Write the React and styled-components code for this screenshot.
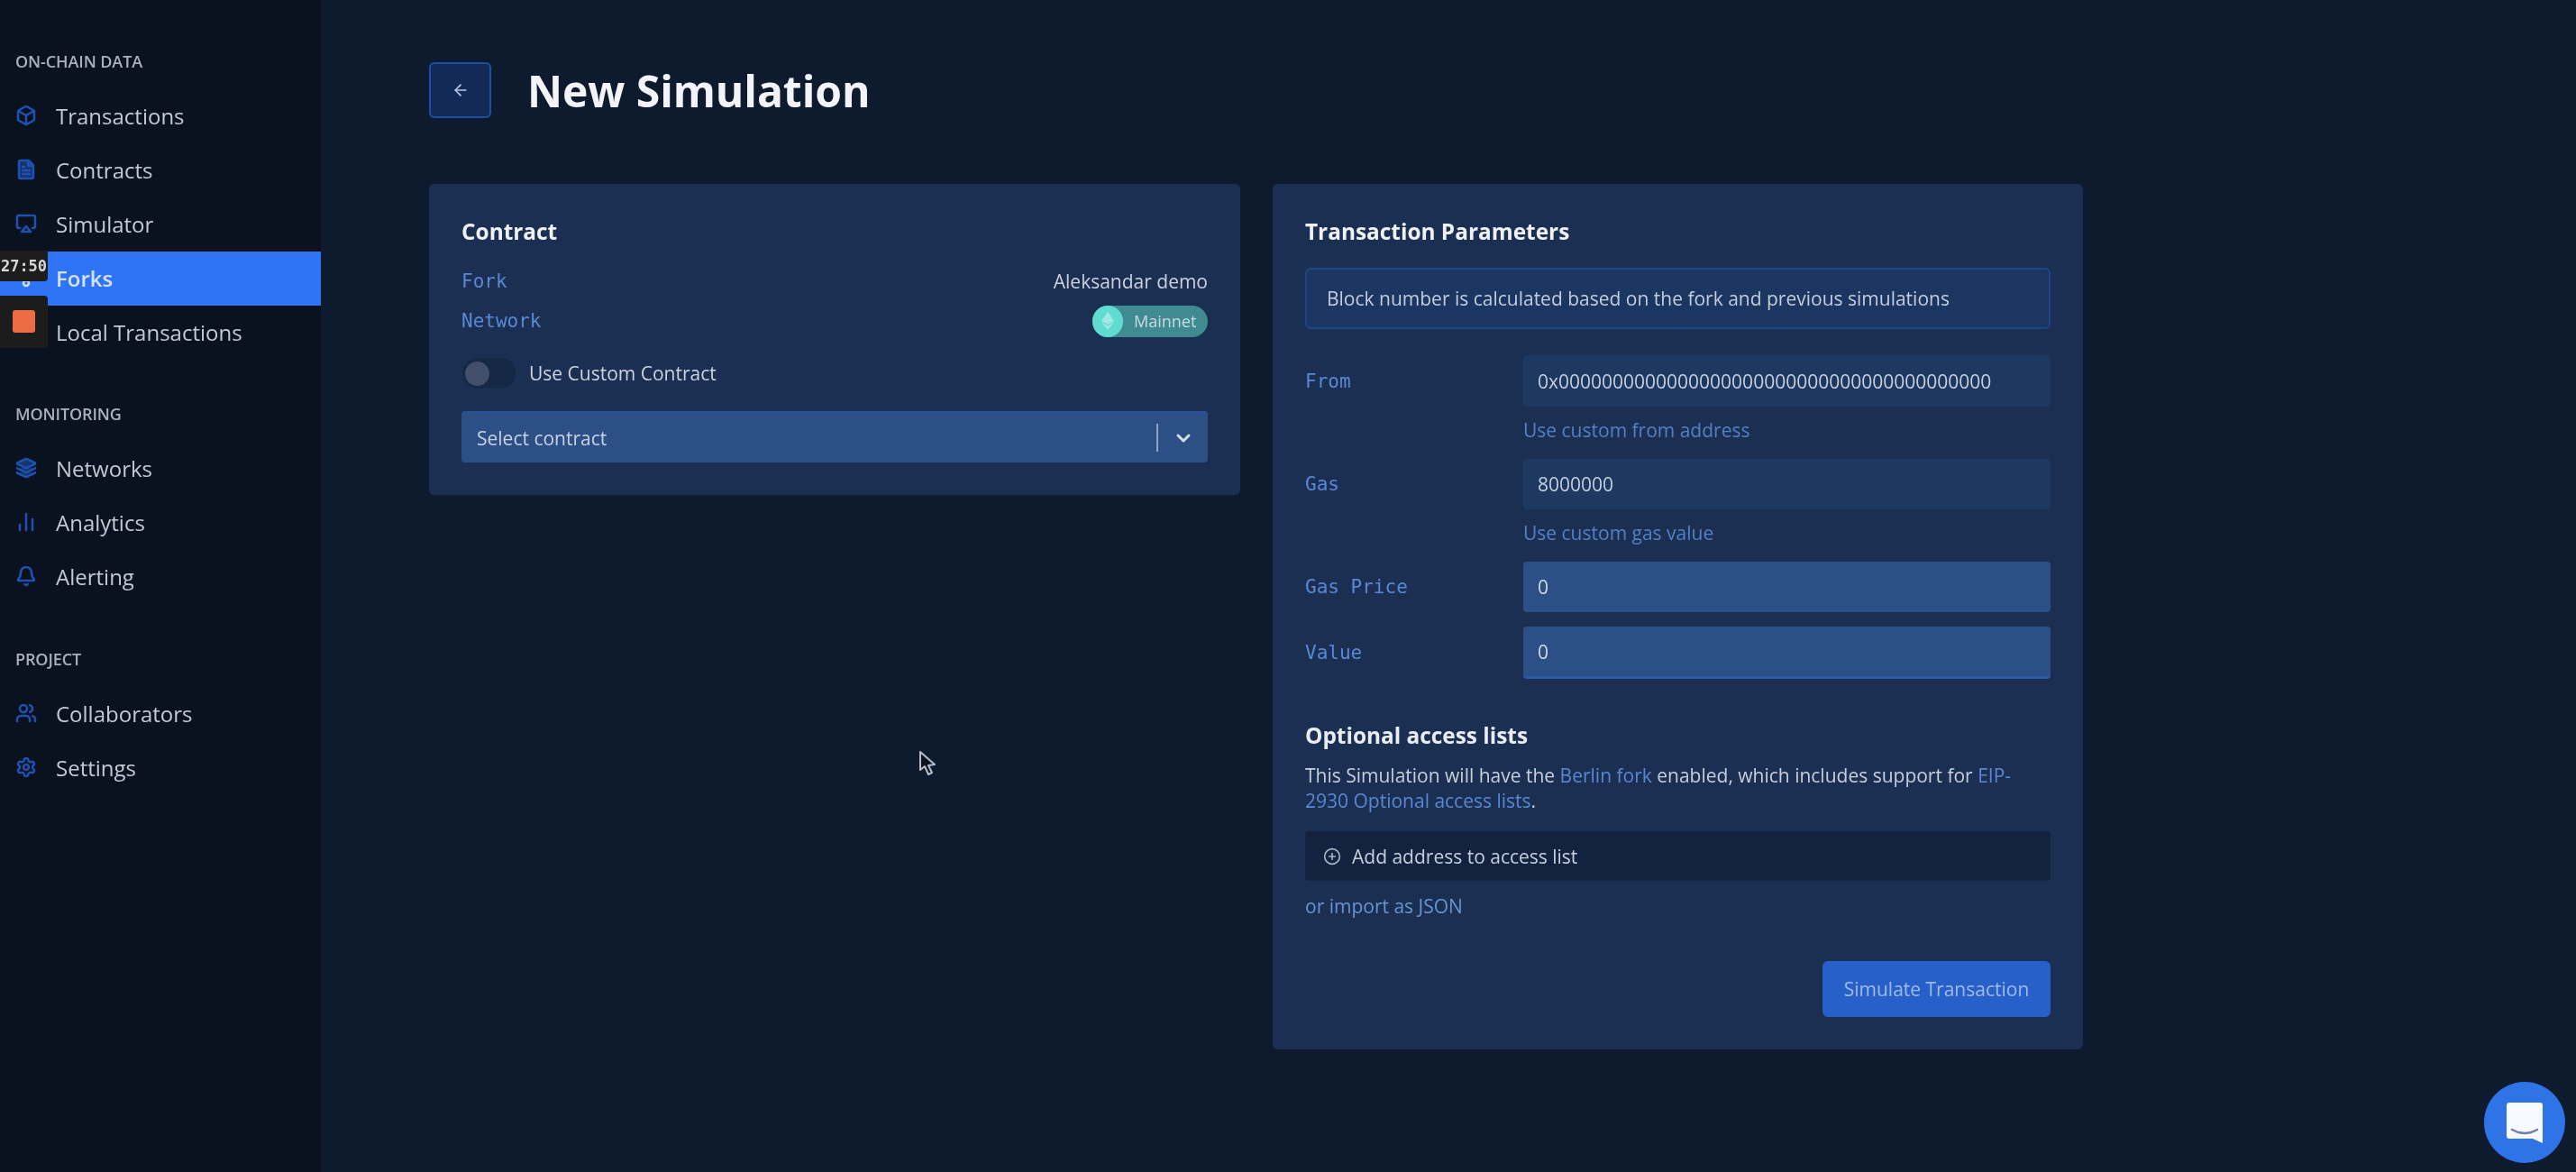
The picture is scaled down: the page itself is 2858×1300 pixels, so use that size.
import React from 'react';
import styled, { createGlobalStyle } from 'styled-components';
import { Box, FileText, Airplay, GitFork, FileClock, Layers, BarChart2, Bell, Users, Settings, ArrowLeft, ChevronDown, PlusCircle } from 'lucide-react';

const Global = createGlobalStyle`
  html, body { margin: 0; padding: 0; background: #0e1a2e; }
  body { font-family: "Open Sans", "Noto Sans", sans-serif; overflow: hidden; }
  * { box-sizing: border-box; }
`;

const Page = styled.div`
  position: relative; display: flex; width: 2858px; height: 1300px; overflow: hidden;
  background: #0e1a2e; color: #d4dae4; filter: blur(0.7px);
`;
const Sidebar = styled.aside`
  width: 356px; flex: none; background: #0a1220; padding-top: 56px;
`;
const Section = styled.section`
  margin-top: ${p => p.$top}px;
`;
const SectionLabel = styled.div`
  height: 24px; line-height: 24px; padding-left: 17px; margin-bottom: 19px;
  font-size: 18px; font-weight: 600; color: #aab1bd; letter-spacing: -0.1px;
`;
const NavItem = styled.div`
  display: flex; align-items: center; gap: 21px; height: 60px; padding: 0 0 2px 17px;
  font-size: 24px; color: ${p => p.$active ? '#d3e2ff' : '#c4cad4'};
  background: ${p => p.$active ? '#2f74f6' : 'transparent'};
  font-weight: ${p => p.$active ? 600 : 400};
  svg { width: 24px; height: 24px; flex: none; stroke-width: 2.5; color: ${p => p.$active ? '#cfe0ff' : '#1f52b0'}; }
`;
const Main = styled.main`
  flex: 1; padding: 69px 0 0 120px;
`;
const Header = styled.header`
  display: flex; align-items: center; gap: 40px; height: 62px; margin-bottom: 73px;
`;
const BackButton = styled.button`
  width: 69px; height: 62px; padding: 0; display: flex; align-items: center; justify-content: center;
  background: #122a55; border: 2px solid #1e4ea6; border-radius: 6px; color: #b9c8e2;
  svg { width: 20px; height: 20px; }
`;
const Title = styled.h1`
  margin: 0; font-size: 48px; font-weight: 700; color: #f2f4f8; letter-spacing: -0.05px;
`;
const Columns = styled.div`
  display: flex; align-items: flex-start; gap: 36px;
`;
const Card = styled.div`
  width: ${p => p.$w}px; background: #1a2f52; border-radius: 6px; padding: 39px 36px 36px;
`;
const CardTitle = styled.h2`
  margin: 0; height: 28px; line-height: 28px; font-size: 24.4px; font-weight: 700; color: #eef1f6;
`;
const InfoRow = styled.div`
  display: flex; align-items: center; justify-content: space-between; height: 36px;
  margin-top: ${p => p.$top}px;
`;
const MonoLabel = styled.span`
  font-family: "DejaVu Sans Mono", "Liberation Mono", monospace; font-size: 21px; color: #5b88d4;
`;
const Value = styled.span`
  font-size: 21px; color: #ccd3df;
`;
const Pill = styled.div`
  display: flex; align-items: center; width: 128px; height: 35px; border-radius: 18px;
  background: #3f8b90; color: #c7dde4; font-size: 18px;
`;
const PillIcon = styled.span`
  width: 34px; height: 35px; border-radius: 17px; background: #5fdccf; display: flex;
  align-items: center; justify-content: center; margin-right: 12px; color: #9fe9e2;
  svg { width: 16px; height: 20px; }
`;
const ToggleRow = styled.div`
  display: flex; align-items: center; gap: 13px; height: 36px; margin-top: 22px; font-size: 21px; color: #ccd3df;
`;
const Toggle = styled.span`
  display: flex; align-items: center; width: 62px; height: 36px; padding-left: 3px; border-radius: 18px;
  background: #152947; border: 1px solid #1e3358;
`;
const Thumb = styled.span`
  width: 27px; height: 27px; border-radius: 50%; background: #414f6b;
`;
const SelectBox = styled.div`
  display: flex; align-items: center; height: 57px; margin-top: 24px; padding-left: 17px;
  background: #2c4f86; border-top: 2px solid #2a5296; border-radius: 4px; font-size: 21px; color: #c9d3e2;
`;
const SelectText = styled.span`
  flex: 1;
`;
const SelectDivider = styled.span`
  width: 2px; height: 31px; background: #8ea4c6;
`;
const SelectArrow = styled.span`
  width: 55px; display: flex; justify-content: center; color: #d6deea;
  svg { width: 24px; height: 24px; stroke-width: 3; }
`;
const Alert = styled.div`
  display: flex; align-items: center; height: 68px; margin-top: 26px; padding-left: 22px;
  background: #1b3661; border: 2px solid #1f4488; border-radius: 6px; font-size: 21px; color: #c4cddc;
`;
const FieldRow = styled.div`
  display: flex; align-items: center; margin-top: ${p => p.$top}px;
`;
const FieldLabel = styled(MonoLabel)`
  width: 242px; flex: none;
`;
const FieldInput = styled.input`
  width: 586px; height: ${p => p.$h}px; padding: 0 16px; border: 0; outline: 0; border-radius: 4px;
  font-family: "Open Sans", sans-serif; font-size: 21px;
  color: ${p => p.$bright ? '#d2d9e6' : '#c6cfdd'};
  background: ${p => p.$bright ? '#2c4f86' : '#1e3961'};
  border-bottom: ${p => p.$edge ? '3px solid #2a5aa8' : '0'};
`;
const Hint = styled.a`
  display: block; height: 30px; line-height: 30px; margin: 11px 0 0 242px; font-size: 21px; color: #5580c4;
`;
const SubHeading = styled.h3`
  margin: 48px 0 0; height: 30px; line-height: 30px; font-size: 24.4px; font-weight: 700; color: #e9edf3;
`;
const Paragraph = styled.p`
  margin: 15px 0 0; font-size: 21px; line-height: 28px; color: #c7cfdc;
`;
const TextLink = styled.a`
  color: #5a88d2;
`;
const AddButton = styled.div`
  display: flex; align-items: center; gap: 12px; height: 55px; margin-top: 20px; padding-left: 20px;
  background: #13233f; border-radius: 4px; font-size: 21px; color: #c7cfdc;
  svg { width: 20px; height: 20px; color: #a9b3c3; }
`;
const ImportLink = styled.a`
  display: block; height: 30px; line-height: 30px; margin-top: 13px; font-size: 21px; color: #6a93d2;
`;
const Footer = styled.div`
  display: flex; justify-content: flex-end; margin-top: 46px;
`;
const SubmitButton = styled.button`
  width: 253px; height: 62px; border: 0; border-radius: 6px; background: #2660c8; padding: 0;
  font-family: "Open Sans", sans-serif; font-size: 21px; color: #9ebbe9;
`;
const TimerBadge = styled.div`
  position: absolute; left: 0; top: 278px; width: 53px; height: 34px; background: #1d1d1e;
  border-radius: 0 0 4px 0; font-family: "DejaVu Sans Mono", monospace; font-size: 17px; font-weight: 700;
  color: #d8d8d8; line-height: 34px; text-align: center; white-space: nowrap;
`;
const StopBox = styled.div`
  position: absolute; left: 0; top: 328px; width: 53px; height: 58px; background: #1c1c1d;
  border-radius: 0 4px 0 0; display: flex; align-items: center; justify-content: center; padding-bottom: 1px;
`;
const StopSquare = styled.span`
  width: 25px; height: 25px; border-radius: 3px; background: #ee6c44;
`;
const ChatBubble = styled.div`
  position: absolute; left: 2756px; top: 1200px; width: 90px; height: 90px; border-radius: 50%;
  background: #2f74e6; display: flex; align-items: center; justify-content: center;
  svg { width: 42px; height: 47px; }
`;
const Pointer = styled.svg`
  position: absolute; left: 1019px; top: 832px; width: 20px; height: 30px;
`;

const NavGroup = ({ label, top, items }) => (
  <Section $top={top}>
    <SectionLabel>{label}</SectionLabel>
    {items.map(({ name, Icon, active, filled }) => (
      <NavItem key={name} $active={active}>
        <Icon fill={filled ? 'currentColor' : 'none'} fillOpacity={filled ? 0.55 : 0} />
        {name}
      </NavItem>
    ))}
  </Section>
);

export default function App() {
  return (
    <Page>
      <Global />
      <Sidebar>
        <NavGroup label="ON-CHAIN DATA" top={0} items={[
          { name: 'Transactions', Icon: Box },
          { name: 'Contracts', Icon: FileText, filled: true },
          { name: 'Simulator', Icon: Airplay },
          { name: 'Forks', Icon: GitFork, active: true },
          { name: 'Local Transactions', Icon: FileClock },
        ]} />
        <NavGroup label="MONITORING" top={48} items={[
          { name: 'Networks', Icon: Layers, filled: true },
          { name: 'Analytics', Icon: BarChart2 },
          { name: 'Alerting', Icon: Bell },
        ]} />
        <NavGroup label="PROJECT" top={49} items={[
          { name: 'Collaborators', Icon: Users },
          { name: 'Settings', Icon: Settings },
        ]} />
      </Sidebar>
      <Main>
        <Header>
          <BackButton><ArrowLeft /></BackButton>
          <Title>New Simulation</Title>
        </Header>
        <Columns>
          <Card $w={900}>
            <CardTitle>Contract</CardTitle>
            <InfoRow $top={23}>
              <MonoLabel>Fork</MonoLabel>
              <Value>Aleksandar demo</Value>
            </InfoRow>
            <InfoRow $top={8}>
              <MonoLabel>Network</MonoLabel>
              <Pill>
                <PillIcon>
                  <svg viewBox="0 0 16 20" fill="currentColor"><path d="M8 0 L15 10 L8 14 L1 10 Z M1 11.5 L8 15.5 L15 11.5 L8 20 Z" /></svg>
                </PillIcon>
                Mainnet
              </Pill>
            </InfoRow>
            <ToggleRow>
              <Toggle><Thumb /></Toggle>
              Use Custom Contract
            </ToggleRow>
            <SelectBox>
              <SelectText>Select contract</SelectText>
              <SelectDivider />
              <SelectArrow><ChevronDown /></SelectArrow>
            </SelectBox>
          </Card>
          <Card $w={899}>
            <CardTitle>Transaction Parameters</CardTitle>
            <Alert>Block number is calculated based on the fork and previous simulations</Alert>
            <FieldRow $top={29}>
              <FieldLabel>From</FieldLabel>
              <FieldInput $h={57} readOnly value="0x0000000000000000000000000000000000000000" />
            </FieldRow>
            <Hint>Use custom from address</Hint>
            <FieldRow $top={17}>
              <FieldLabel>Gas</FieldLabel>
              <FieldInput $h={56} readOnly value="8000000" />
            </FieldRow>
            <Hint>Use custom gas value</Hint>
            <FieldRow $top={17}>
              <FieldLabel>Gas Price</FieldLabel>
              <FieldInput $h={56} $bright readOnly value="0" />
            </FieldRow>
            <FieldRow $top={16}>
              <FieldLabel>Value</FieldLabel>
              <FieldInput $h={58} $bright $edge readOnly value="0" />
            </FieldRow>
            <SubHeading>Optional access lists</SubHeading>
            <Paragraph>
              This Simulation will have the <TextLink>Berlin fork</TextLink> enabled, which includes support for <TextLink>EIP-2930 Optional access lists</TextLink>.
            </Paragraph>
            <AddButton><PlusCircle />Add address to access list</AddButton>
            <ImportLink>or import as JSON</ImportLink>
            <Footer><SubmitButton>Simulate Transaction</SubmitButton></Footer>
          </Card>
        </Columns>
      </Main>
      <TimerBadge>27:50</TimerBadge>
      <StopBox><StopSquare /></StopBox>
      <Pointer viewBox="0 0 20 30">
        <path d="M2 2 L2 22 L7 18 L11 27 L15 25 L11 17 L18 16 Z" fill="#0b1322" stroke="#b8bec8" strokeWidth="2" strokeLinejoin="round" />
      </Pointer>
      <ChatBubble>
        <svg viewBox="0 0 42 47">
          <path d="M4 1 H38 Q41 1 41 4 V46 L30 41 H4 Q1 41 1 38 V4 Q1 1 4 1 Z" fill="#f6f9ff" />
          <path d="M7 31 Q21 39 35 31" fill="none" stroke="#6b7fa8" strokeWidth="2.5" strokeLinecap="round" />
        </svg>
      </ChatBubble>
    </Page>
  );
}
